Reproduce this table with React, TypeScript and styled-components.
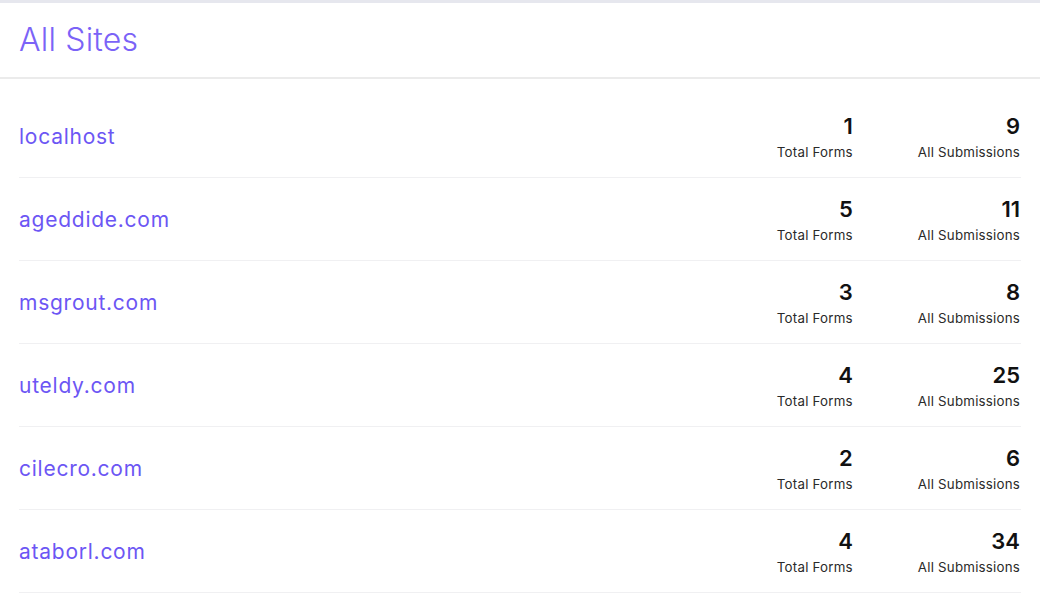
import styled, { createGlobalStyle } from "styled-components";

const sites = [
  { name: "localhost", forms: 1, submissions: 9 },
  { name: "ageddide.com", forms: 5, submissions: 11 },
  { name: "msgrout.com", forms: 3, submissions: 8 },
  { name: "uteldy.com", forms: 4, submissions: 25 },
  { name: "cilecro.com", forms: 2, submissions: 6 },
  { name: "ataborl.com", forms: 4, submissions: 34 },
];

const GlobalStyle = createGlobalStyle`
  body {
    margin: 0;
    background: #fff;
    font-family: Inter, "Noto Sans", sans-serif;
  }
`;

export default function App() {
  return (
    <>
      <GlobalStyle />
      <Page>
        <Header>
          <Title>All Sites</Title>
        </Header>
        <List>
          {sites.map((site) => (
            <Row key={site.name}>
              <SiteName href="#">{site.name}</SiteName>
              <Stats>
                <Stat>
                  <StatValue>{site.forms}</StatValue>
                  <StatLabel>Total Forms</StatLabel>
                </Stat>
                <Stat>
                  <StatValue>{site.submissions}</StatValue>
                  <StatLabel>All Submissions</StatLabel>
                </Stat>
              </Stats>
            </Row>
          ))}
        </List>
      </Page>
    </>
  );
}

const Page = styled.div`
  border-top: 3px solid #e6e7ee;
  min-height: 597px;
`;

const Header = styled.header`
  height: 74px;
  padding: 0 19px;
  display: flex;
  align-items: center;
  border-bottom: 2px solid #ebebeb;
`;

const Title = styled.h1`
  margin: 0 0 2px;
  font-family: Inter, sans-serif;
  font-weight: 300;
  font-size: 32px;
  color: #7b63f7;
  letter-spacing: 0.2px;
`;

const List = styled.div`
  padding: 16px 19px 0;
`;

const Row = styled.div`
  height: 82px;
  display: flex;
  align-items: center;
  justify-content: space-between;
  border-bottom: 1px solid #f0f0f2;
`;

const SiteName = styled.a`
  font-family: Inter, sans-serif;
  font-size: 21px;
  font-weight: 400;
  color: #6c56f4;
  text-decoration: none;
  letter-spacing: 0.75px;
`;

const Stats = styled.div`
  display: flex;
  gap: 65px;
  margin-right: 1px;
  padding-top: 2px;
`;

const Stat = styled.div`
  display: flex;
  flex-direction: column;
  align-items: flex-end;
`;

const StatValue = styled.div`
  font-family: Inter, sans-serif;
  font-size: 22px;
  font-weight: 600;
  color: #111;
  line-height: 26px;
`;

const StatLabel = styled.div`
  margin-top: 4px;
  font-family: Inter, sans-serif;
  font-size: 13.3px;
  font-weight: 400;
  color: #2a2a2a;
  line-height: 18px;
  letter-spacing: 0.22px;
`;
